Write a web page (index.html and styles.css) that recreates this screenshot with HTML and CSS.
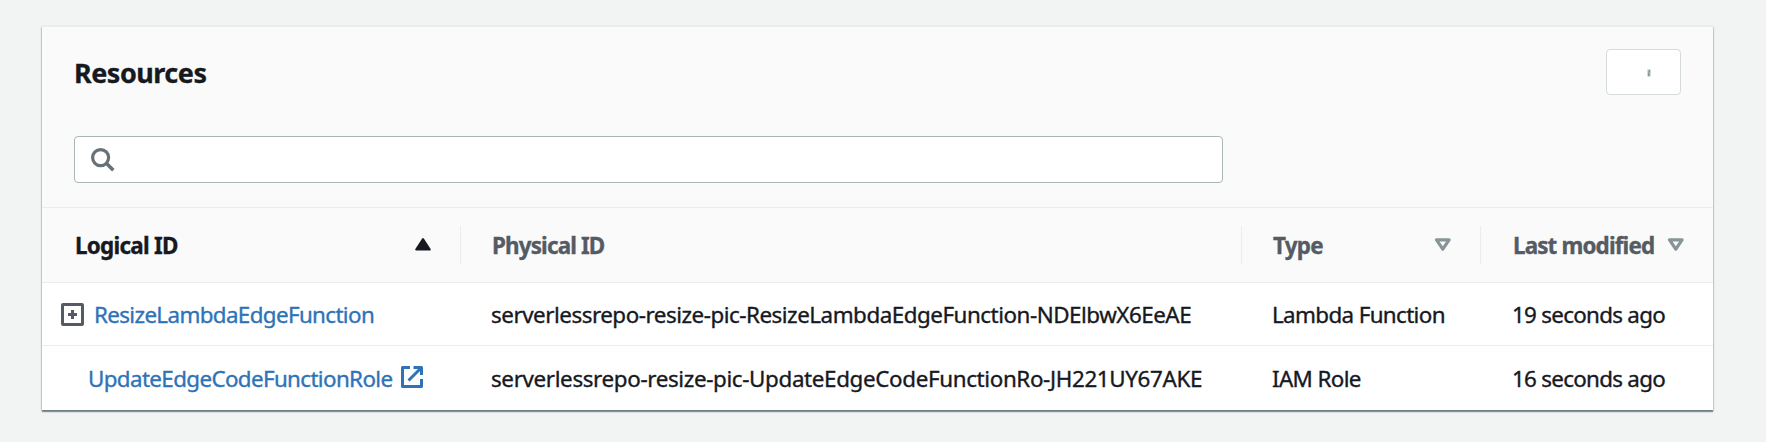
FILE: index.html
```html
<!DOCTYPE html>
<html lang="en">
<head>
<meta charset="utf-8">
<title>Resources</title>
<link rel="stylesheet" href="styles.css">
</head>
<body>
<main class="panel">
  <header class="panel-header">
    <div class="title-row">
      <h2 class="title"><span class="t">Resources</span></h2>
      <button class="refresh" aria-label="Refresh"><svg width="6" height="10" viewBox="0 0 6 10"><path d="M3 1.500v7" stroke="#a9b6b8" stroke-width="3" fill="none"/><path d="M3.500 2v2.500M2.500 5v3" stroke="#7f9193" stroke-width="1" fill="none"/></svg></button>
    </div>
    <div class="search">
      <svg width="26" height="26" viewBox="0 0 26 26" fill="none" stroke="#687078"><circle cx="10.6" cy="10.6" r="8" stroke-width="3.2"/><path d="M16.3 16.3l7 6.9" stroke-width="3.6"/></svg>
    </div>
  </header>
  <section class="table">
    <div class="row head">
      <div class="cell first active"><span class="t">Logical ID</span><svg class="sort" width="18" height="15" viewBox="0 0 18 15"><path d="M9 2L15.8 12.6H2.2z" fill="#16191f" stroke="#16191f" stroke-width="2" stroke-linejoin="round"/></svg></div>
      <div class="cell"><span class="t tight">Physical ID</span></div>
      <div class="cell"><span class="t">Type</span><svg class="sort" width="18" height="15" viewBox="0 0 18 15"><path d="M2.500 2.800h12.600L8.800 12.200z" fill="none" stroke="#879596" stroke-width="3.200" stroke-linejoin="round"/></svg></div>
      <div class="cell modified"><span class="t tight">Last modified</span><svg class="sort" width="18" height="15" viewBox="0 0 18 15"><path d="M2.500 2.800h12.600L8.800 12.200z" fill="none" stroke="#879596" stroke-width="3.200" stroke-linejoin="round"/></svg></div>
    </div>
    <div class="row">
      <div class="cell expandable"><svg width="23" height="23" viewBox="0 0 23 23" fill="none" stroke="#545b64"><rect x="1.5" y="1.5" width="20" height="20" rx=".5" stroke-width="3"/><path d="M7 11.5h9M11.5 7v9" stroke-width="3"/></svg><a class="link"><span class="t">ResizeLambdaEdgeFunction</span></a></div>
      <div class="cell physical"><span class="t">serverlessrepo-resize-pic-ResizeLambdaEdgeFunction-NDElbwX6EeAE</span></div>
      <div class="cell"><span class="t">Lambda Function</span></div>
      <div class="cell modified"><span class="t">19 seconds ago</span></div>
    </div>
    <div class="row last">
      <div class="cell child"><a class="link"><span class="t">UpdateEdgeCodeFunctionRole</span><svg width="24" height="24" viewBox="0 0 24 24" fill="none" stroke="#2e73b8" stroke-width="3"><path d="M10 2.500H2.500v19h19V14M13.500 2.500h8V10M8.500 15.500L20.500 3.500" stroke-linejoin="round"/></svg></a></div>
      <div class="cell physical loose"><span class="t">serverlessrepo-resize-pic-UpdateEdgeCodeFunctionRo-JH221UY67AKE</span></div>
      <div class="cell"><span class="t">IAM Role</span></div>
      <div class="cell modified"><span class="t">16 seconds ago</span></div>
    </div>
  </section>
</main>
</body>
</html>
```
FILE: styles.css
```css
* { box-sizing: border-box; }
body { margin: 0; padding: 26px 52px 0 42px; height: 442px; overflow: hidden; background: #f2f4f4; color: #16191f; font: 450 22.4px/32px "Noto Sans", sans-serif; font-stretch: 90%; }
.panel { width: 1671px; height: 384px; background: #fff; border-top: 1px solid #eaeded; box-shadow: 0 2px 1px 0 rgba(0,28,36,.35), 0 1px 2px 0 rgba(0,28,36,.45); }
.panel-header { height: 180px; padding: 22px 32px 0 32px; background: #fafafa; }
.title-row { display: flex; justify-content: space-between; height: 87px; }
.title { margin: 0; padding-top: 5px; font-size: 27px; line-height: 38px; font-weight: 700; letter-spacing: -.5px; -webkit-text-stroke: .3px currentColor; }
.t { display: inline-block; white-space: nowrap; padding-top: 2px; }
.title .t { padding: 0; }
.refresh { width: 75px; height: 46px; padding: 1px 0 0 11px; display: flex; align-items: center; justify-content: center; background: #fff; border: 1px solid #d5dbdb; border-radius: 4px; }
.search { width: 1149px; height: 47px; display: flex; align-items: center; padding-left: 15px; padding-top: 1px; background: #fff; border: 1px solid #aab7b8; border-radius: 4px; }
.row { display: grid; grid-template-columns: 418px 781px 239px 233px; height: 63px; border-bottom: 1px solid #eaeded; letter-spacing: -.64px; -webkit-text-stroke: .35px currentColor; }
.row svg { flex: none; }
.row.last { border: 0; }
.cell { display: flex; align-items: center; padding-left: 31px; }
.physical { letter-spacing: -.48px; }
.loose { letter-spacing: -.36px; }
.head { height: 76px; background: #fafafa; border-top: 1px solid #eaeded; font-weight: 700; color: #545b64; letter-spacing: -.72px; }
.tight { letter-spacing: -.85px; }
.modified { padding-left: 32px; letter-spacing: -.72px; }
.head .cell { height: 38px; margin-top: 18px; justify-content: space-between; padding-right: 28px; border-left: 1px solid #eaeded; }
.head .modified { padding-left: 32px; }
.head .first { padding-left: 33px; border: 0; color: #16191f; }
.sort { margin-top: -1px; }
.expandable { padding-left: 19px; gap: 10px; }
.child { padding-left: 46px; }
.link { display: flex; align-items: center; gap: 8px; color: #2e73b8; }
.child svg { margin-top: -1px; }
```
